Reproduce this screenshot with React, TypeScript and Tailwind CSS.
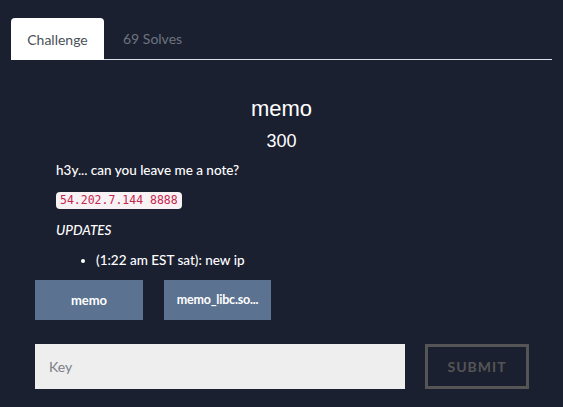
export default function App() {
  return (
    <div className="w-[563px] h-[407px] bg-[#1b2031] overflow-hidden font-['Lato','Liberation_Sans',sans-serif] text-white">
      <div className="pt-[18px] pl-[11px] pr-[11px]">
        <div className="flex items-end border-b border-[#dee2e6] h-[42px]">
          <div className="w-[93px] h-[42px] bg-white rounded-t-[4px] flex items-center justify-center text-[14px] text-[#495057] mb-[-1px] pt-[1px]">
            Challenge
          </div>
          <div className="h-[41px] px-[19px] flex items-center text-[14px] text-[#6c757d]">69 Solves</div>
        </div>
      </div>

      <div className="flex flex-col items-center mt-[36px]">
        <div className="text-[22px] leading-[26px] font-['Liberation_Sans',sans-serif]">memo</div>
        <div className="text-[18px] leading-[22px] mt-[8px] font-['Liberation_Sans',sans-serif]">300</div>
      </div>

      <div className="pl-[56px] mt-[8px] text-[13.5px] font-medium">
        <p className="leading-[20px]">h3y... can you leave me a note?</p>
        <code className="inline-block mt-[12px] px-[4px] py-[1px] rounded-[4px] bg-[#f9f2f4] text-[#c7254e] text-[11.5px] leading-[15px] font-['DejaVu_Sans_Mono',monospace]">
          54.202.7.144 8888
        </code>
        <p className="mt-[11px] italic leading-[20px]">UPDATES</p>
        <ul className="list-disc pl-[40px] mt-[10px] leading-[20px]">
          <li>(1:22 am EST sat): new ip</li>
        </ul>
      </div>

      <div className="flex gap-[21px] pl-[35px] mt-[10px]">
        <div className="w-[108px] h-[40px] bg-[#5b7290] flex items-center justify-center text-[13px] font-bold">memo</div>
        <div className="w-[107px] h-[40px] bg-[#5b7290] flex items-center justify-center text-[12.5px] font-bold tracking-[-0.2px]">memo_libc.so...</div>
      </div>

      <div className="flex gap-[20px] pl-[35px] mt-[24px]">
        <input
          placeholder="Key"
          className="w-[370px] h-[45px] bg-[#eeeeee] px-[14px] text-[14px] text-[#495057] placeholder:text-[#7a8088] outline-none"
        />
        <button className="w-[104px] h-[45px] border-[3px] border-[#555555] text-[#555555] text-[14px] font-bold tracking-[1px]">
          SUBMIT
        </button>
      </div>
    </div>
  );
}
